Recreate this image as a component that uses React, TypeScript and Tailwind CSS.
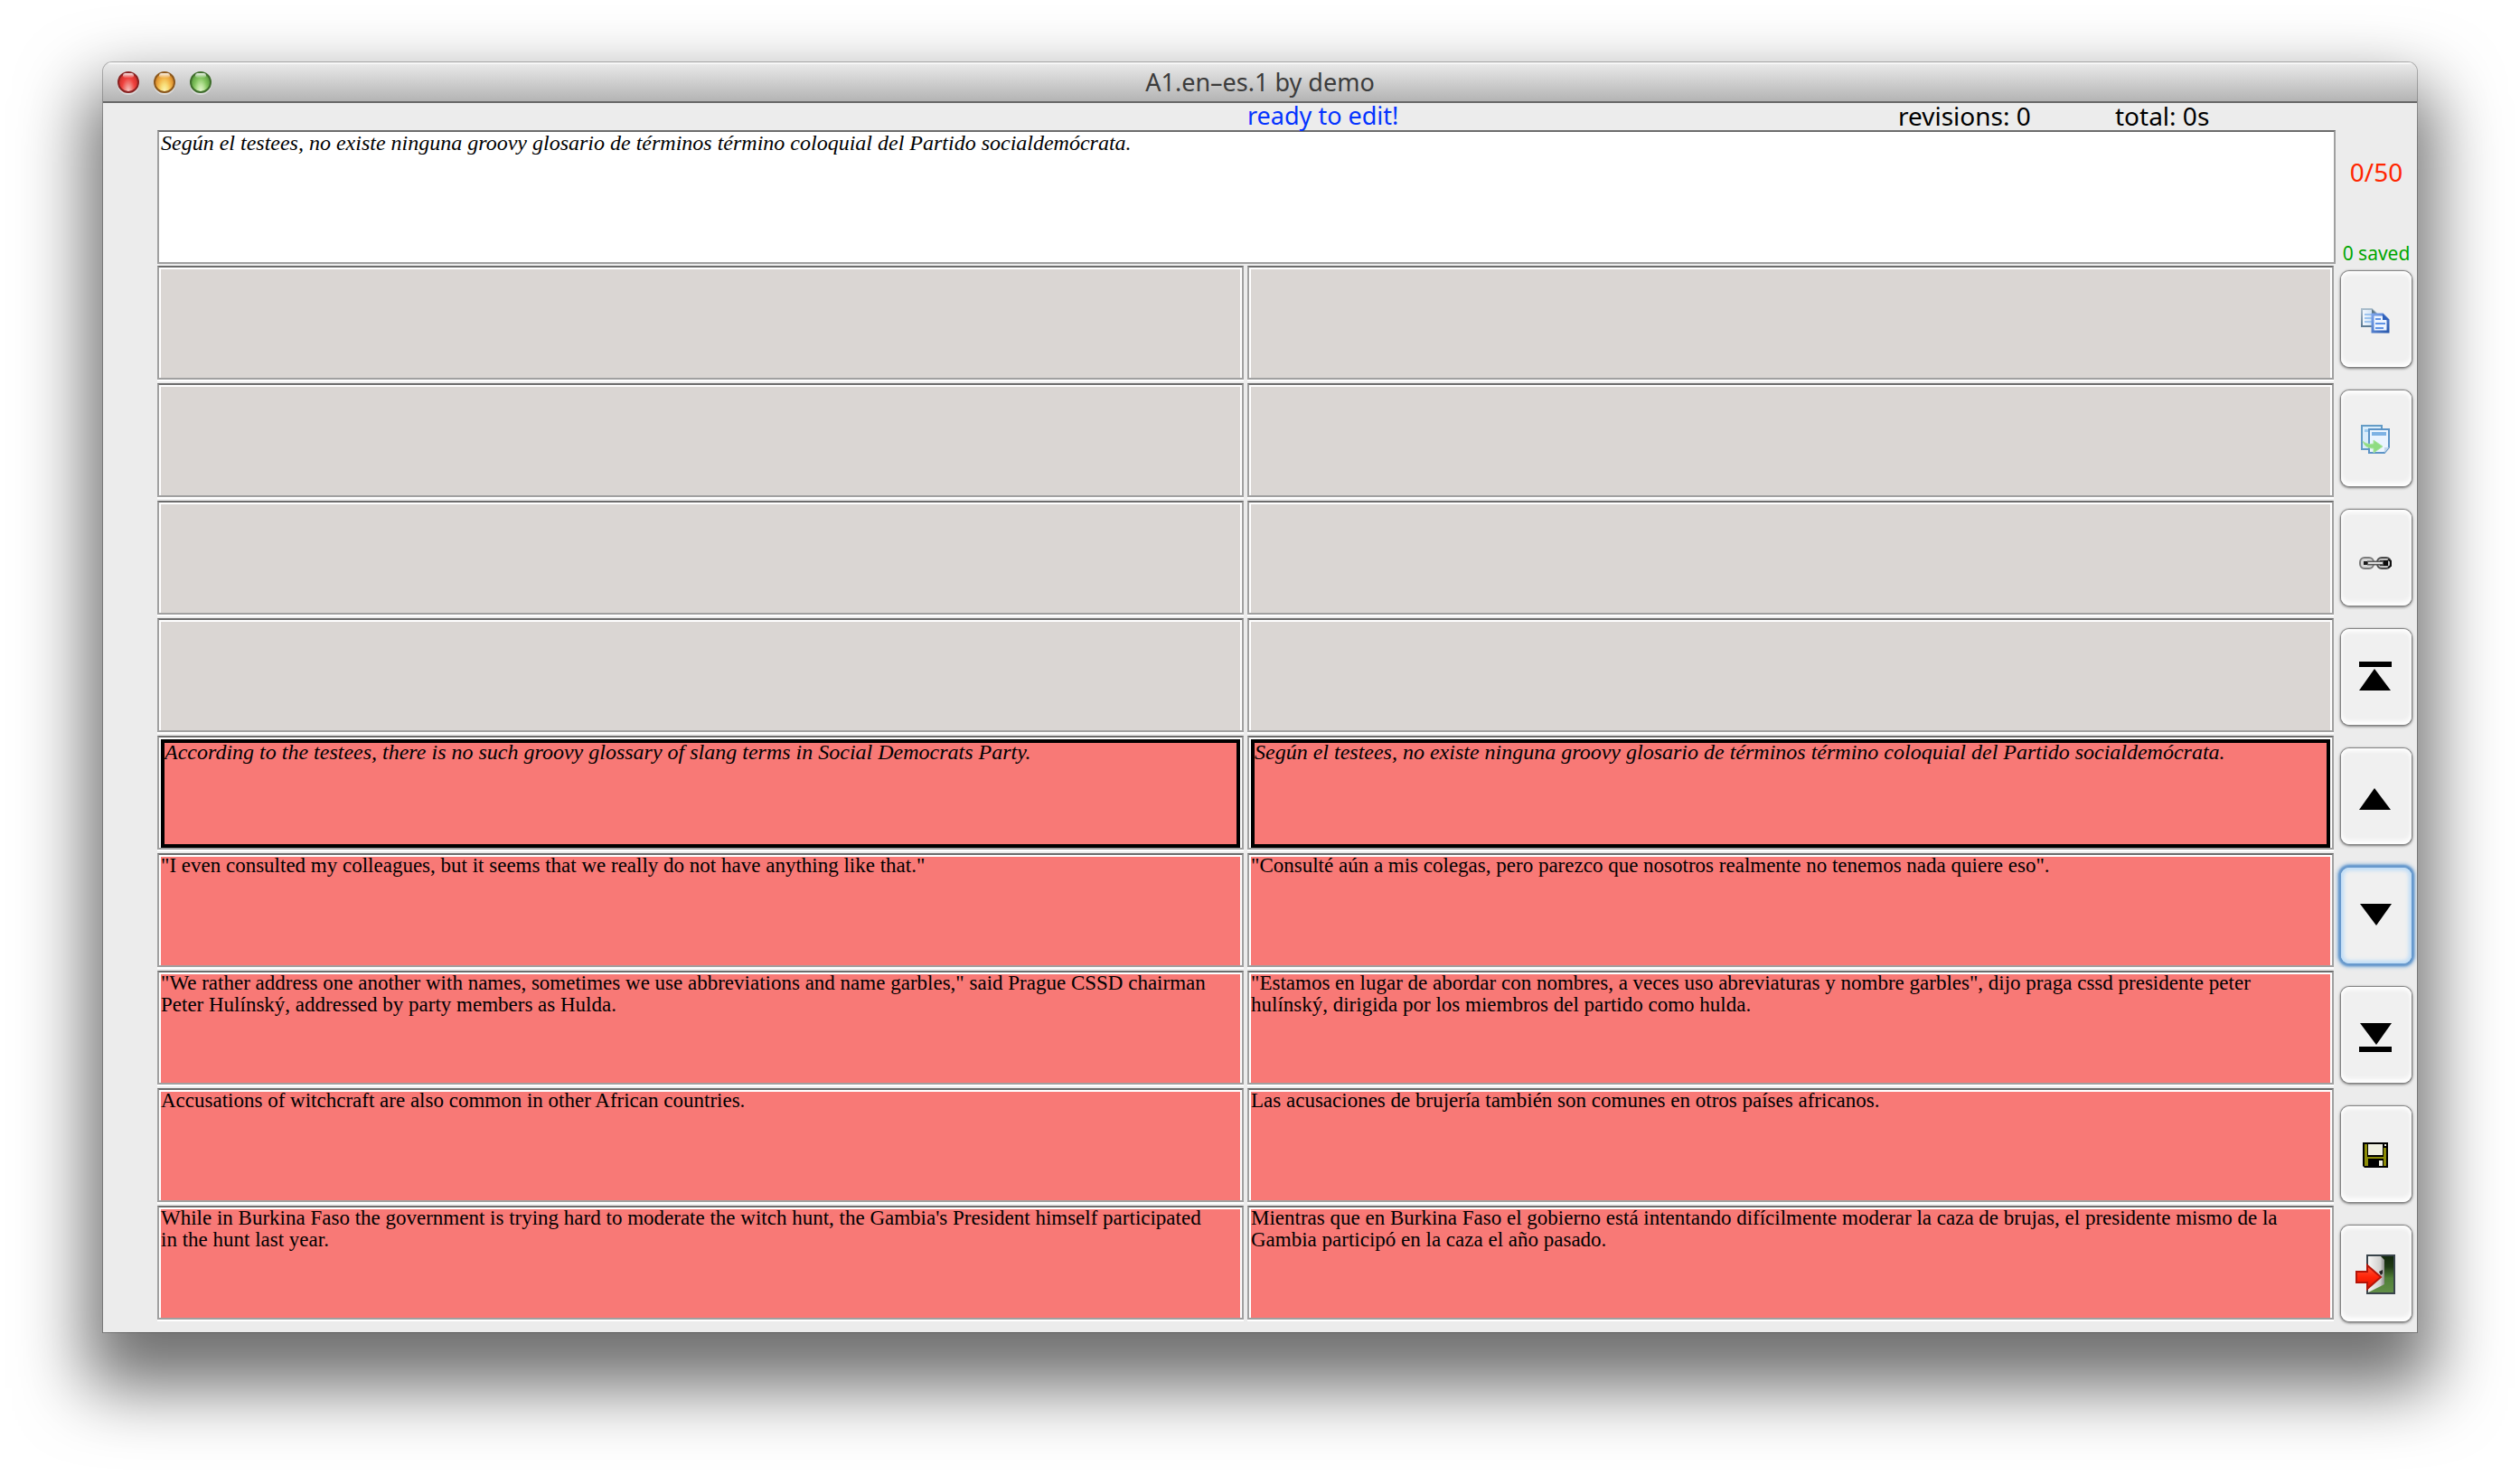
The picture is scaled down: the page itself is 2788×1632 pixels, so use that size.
import type { ReactNode } from "react";

const serif = "font-['Liberation_Serif',serif] leading-[24px] text-black";
const bevel = "border-2 border-[#a0a0a0] border-t-[#6c6c6c]";

type Pair = { source: string; target: string; state: "empty" | "active" | "pending" };

const empty: Pair = { source: "", target: "", state: "empty" };

const pairs: Pair[] = [
  empty,
  empty,
  empty,
  empty,
  {
    source: "According to the testees, there is no such groovy glossary of slang terms in Social Democrats Party.",
    target:
      "Según el testees, no existe ninguna groovy glosario de términos término coloquial del Partido socialdemócrata.",
    state: "active",
  },
  {
    source: '"I even consulted my colleagues, but it seems that we really do not have anything like that."',
    target: '"Consulté aún a mis colegas, pero parezco que nosotros realmente no tenemos nada quiere eso".',
    state: "pending",
  },
  {
    source:
      '"We rather address one another with names, sometimes we use abbreviations and name garbles," said Prague CSSD chairman\nPeter Hulínský, addressed by party members as Hulda.',
    target:
      '"Estamos en lugar de abordar con nombres, a veces uso abreviaturas y nombre garbles", dijo praga cssd presidente peter\nhulínský, dirigida por los miembros del partido como hulda.',
    state: "pending",
  },
  {
    source: "Accusations of witchcraft are also common in other African countries.",
    target: "Las acusaciones de brujería también son comunes en otros países africanos.",
    state: "pending",
  },
  {
    source:
      "While in Burkina Faso the government is trying hard to moderate the witch hunt, the Gambia's President himself participated\nin the hunt last year.",
    target:
      "Mientras que en Burkina Faso el gobierno está intentando difícilmente moderar la caza de brujas, el presidente mismo de la\nGambia participó en la caza el año pasado.",
    state: "pending",
  },
];

const fills = {
  empty: "bg-[#dad6d3]",
  pending: "bg-[#f87976] text-[23px]",
  active: "bg-[#f87976] border-4 border-black italic text-[24px]",
};

function Cell({ text, state }: { text: string; state: Pair["state"] }) {
  return (
    <div className={`h-[126px] min-w-0 flex-1 bg-white px-[2px] pt-[2px] shadow-[0_2px_0_#ffffff] ${bevel}`}>
      <div className={`flex h-full ${serif} ${fills[state]}`}>
        <p className="-mt-[2px] whitespace-pre-line">{text}</p>
      </div>
    </div>
  );
}

function CopyIcon() {
  return (
    <svg width="32" height="28" viewBox="0 0 32 28" fill="none">
      <defs>
        <linearGradient id="back" x1="0" y1="0" x2="0" y2="1">
          <stop offset="0" stopColor="#a9bccb" />
          <stop offset="1" stopColor="#5d7b94" />
        </linearGradient>
        <linearGradient id="front" x1="0" y1="0" x2="1" y2="1">
          <stop offset="0" stopColor="#7aa2ea" />
          <stop offset="1" stopColor="#2b5aae" />
        </linearGradient>
        <linearGradient id="paper" x1="0" y1="0" x2="1" y2="0">
          <stop offset="0" stopColor="#f4f9fe" />
          <stop offset="1" stopColor="#c4daf0" />
        </linearGradient>
      </defs>
      <path d="M1 1h11l5 5v14H1z" fill="url(#paper)" stroke="url(#back)" strokeWidth="2" />
      <path d="M12 1v5h5z" fill="#5d7686" />
      <path d="M4 7h8M4 11h8M4 15h8" stroke="#9cc3ee" strokeWidth="2" />
      <path d="M13 7h11l6 6v13H13z" fill="#edf4ff" stroke="url(#front)" strokeWidth="3" />
      <path d="M24 6v7h7z" fill="#2f60ba" />
      <path d="M16 12h6M16 17h11M16 22h9" stroke="#5f93e6" strokeWidth="2" />
    </svg>
  );
}

function CopyAllIcon() {
  return (
    <svg width="32" height="32" viewBox="0 0 32 32" fill="none">
      <path d="M1 1h22v26H1z" fill="#d9edfb" stroke="#649cc6" strokeWidth="2" />
      <path d="M4 5h6v3H4z" fill="#9ccbf0" />
      <path d="M9 5h22v20l-5 6H9z" fill="#eaf4fe" stroke="#5d94c6" strokeWidth="2" />
      <path d="M31 25h-5v6z" fill="#c3d8ea" />
      <path d="M12 8h16v4H12z" fill="#7db2e4" />
      <path d="M2 18c3 3 7 4 12 3v-4l10 7-10 7v-5c-6 0-10-2-12-8z" fill="#8fdc82" stroke="#a9e59f" />
    </svg>
  );
}

function LinkIcon() {
  return (
    <svg width="36" height="14" viewBox="0 0 36 14" fill="none">
      <rect x="1" y="1" width="15" height="12" rx="5" fill="#d6d6d6" stroke="#7b7b7b" strokeWidth="2" />
      <rect x="20" y="1" width="15" height="12" rx="5" fill="#c2c2c2" stroke="#4c4c4c" strokeWidth="2" />
      <path d="M5 5h8v4H5z" fill="#1c1c1c" />
      <path d="M23 4h9v6h-9z" fill="#0c0c0c" />
      <path d="M9 7h18" stroke="#5a5a5a" strokeWidth="5" />
      <path d="M10 7h16" stroke="#dedede" strokeWidth="2" />
      <path d="M32 3l3 2v5l-3 2" stroke="#111" strokeWidth="2" />
    </svg>
  );
}

function ArrowIcon({ down = false, bar = false }: { down?: boolean; bar?: boolean }) {
  return (
    <svg width="36" height="36" viewBox="0 0 36 36">
      {down ? <path d="M1 4h35L19 28z" /> : <path d="M17 8l18 24H0z" />}
      {bar && (down ? <rect y="30" width="36" height="6" /> : <rect width="36" height="6" />)}
    </svg>
  );
}

function SaveIcon() {
  return (
    <svg width="28" height="28" viewBox="0 0 28 28">
      <path d="M0 0h28v28H2l-2-2z" />
      <path d="M2 2h3v14h18V6h3v20h-3v-8H6v8H2z" fill="#8c8c06" />
      <path d="M6 2h16v12H6z" fill="#f0f0e2" />
      <path d="M24 2h2v2h-2zM18 20h4v6h-4z" fill="#f0f0e2" />
    </svg>
  );
}

function ExitIcon() {
  return (
    <svg width="44" height="44" viewBox="0 0 44 44">
      <defs>
        <linearGradient id="grass" x1="0" y1="0" x2="0" y2="1">
          <stop offset="0" stopColor="#12260c" />
          <stop offset="0.3" stopColor="#1f3a15" />
          <stop offset="0.6" stopColor="#4f7f37" />
          <stop offset="1" stopColor="#628f48" />
        </linearGradient>
        <linearGradient id="door" x1="0" y1="0" x2="1" y2="0">
          <stop offset="0" stopColor="#f6f6f5" />
          <stop offset="0.75" stopColor="#d0d0ce" />
          <stop offset="1" stopColor="#8b8c89" />
        </linearGradient>
        <linearGradient id="arrow" x1="0" y1="0" x2="0" y2="1">
          <stop offset="0" stopColor="#ff5a3c" />
          <stop offset="0.5" stopColor="#ff2408" />
          <stop offset="1" stopColor="#e01400" />
        </linearGradient>
      </defs>
      <rect x="13" y="1" width="30" height="42" fill="url(#grass)" stroke="#39444b" strokeWidth="2" />
      <path d="M14 2h14l4 4v27L14 42z" fill="url(#door)" />
      <path d="M26 19l4-2v4l-2 2z" fill="#222" />
      <path d="M1 19h12v-7l15 13-15 13v-7H1z" fill="url(#arrow)" stroke="#b41408" strokeWidth="2" />
    </svg>
  );
}

const tools: { label: string; icon: ReactNode; focused?: boolean; inset?: string }[] = [
  { label: "Copy", icon: <CopyIcon />, inset: "pt-[4px]" },
  { label: "Copy all", icon: <CopyAllIcon /> },
  { label: "Link", icon: <LinkIcon />, inset: "pt-[12px]" },
  { label: "First", icon: <ArrowIcon bar /> },
  { label: "Previous", icon: <ArrowIcon /> },
  { label: "Next", icon: <ArrowIcon down />, focused: true },
  { label: "Last", icon: <ArrowIcon down bar /> },
  { label: "Save", icon: <SaveIcon /> },
  { label: "Exit", icon: <ExitIcon /> },
];

const raised =
  "shadow-[0_0_1px_1px_#808080,0_1px_3px_1px_#7c7c7c,inset_0_3px_4px_#ffffff,inset_0_-4px_5px_#ffffff]";
const ring =
  "shadow-[0_0_2px_3px_#6698cc,0_0_4px_4px_#8fb6dc,inset_0_0_4px_3px_#bcdcf8]";

const lights = [
  {
    label: "Close",
    look: "bg-[radial-gradient(ellipse_at_50%_100%,#f9c9c6_0%,#f0827c_28%,#f0423e_52%,#d8342f_75%,#a02422_100%)] border-[#8a2322]",
  },
  {
    label: "Minimize",
    look: "bg-[radial-gradient(ellipse_at_50%_100%,#fdf6b8_0%,#f8dd78_28%,#f2b549_52%,#dd9230_75%,#a8641c_100%)] border-[#8c581c]",
  },
  {
    label: "Zoom",
    look: "bg-[radial-gradient(ellipse_at_50%_100%,#e6f7d0_0%,#b8e298_28%,#84c560_52%,#66a748_75%,#41772d_100%)] border-[#3f6e2c]",
  },
];

export default function App() {
  return (
    <div className="min-h-screen bg-white px-[114px] pt-[69px] pb-[158px] font-['Noto_Sans','Lucida_Grande',sans-serif] text-[27px] leading-[28px] text-black">
      <main className="overflow-hidden rounded-t-[10px] bg-[#ececec] shadow-[0_0_0_1px_#00000040,0_44px_76px_18px_#0000008f]">
        <header className="relative flex h-[45px] items-center justify-center border-b-2 border-[#686868] bg-linear-to-b from-[#ebebeb] to-[#b4b4b4] shadow-[inset_0_2px_0_#f6f6f6]">
          <div className="absolute left-4 flex gap-4">
            {lights.map((l) => (
              <button
                key={l.label}
                aria-label={l.label}
                className={`relative size-6 rounded-full border-2 shadow-[0_2px_0_#ffffff70] ${l.look}`}
              >
                <span className="absolute inset-x-1 top-0 h-[5px] rounded-full bg-linear-to-b from-white/90 to-white/10" />
              </button>
            ))}
          </div>
          <h1 className="text-[#3c3c3c]">A1.en–es.1 by demo</h1>
        </header>

        <div className="flex">
          <section className="min-w-0 flex-1 pb-[14px] pl-[60px]">
            <div className="grid h-[30px] grid-cols-[1206px_720px_240px_auto]">
              <span className="col-start-2 text-[#0433ff]">ready to edit!</span>
              <span className="text-[28px] whitespace-nowrap">revisions: 0</span>
              <span className="text-[28px]">total: 0s</span>
            </div>
            <textarea
              aria-label="Translation"
              className={`block h-[148px] w-full resize-none overflow-hidden bg-white pl-[2px] text-[24px] italic outline-none ${bevel} ${serif}`}
              defaultValue={pairs[4].target}
            />
            <div className="mt-[2px] mr-[2px] flex flex-col gap-1">
              {pairs.map((p, i) => (
                <div key={i} className="flex gap-1">
                  <Cell text={p.source} state={p.state} />
                  <Cell text={p.target} state={p.state} />
                </div>
              ))}
            </div>
          </section>

          <aside className="flex w-[90px] flex-col items-center pt-[62px]">
            <output className="text-[28px]  text-[#ff2600]">0/50</output>
            <output className="mt-[62px] text-[21px] whitespace-nowrap text-[#00a600]">0 saved</output>
            <div className="mt-[6px] flex flex-col gap-[26px]">
              {tools.map((t) => (
                <button
                  key={t.label}
                  aria-label={t.label}
                  className={`flex h-[106px] w-[78px] items-center justify-center rounded-[9px] bg-[#f0f0f0] pr-[2px] ${t.inset ?? "pt-[2px]"} ${t.focused ? ring : raised}`}
                >
                  {t.icon}
                </button>
              ))}
            </div>
          </aside>
        </div>
      </main>
    </div>
  );
}
